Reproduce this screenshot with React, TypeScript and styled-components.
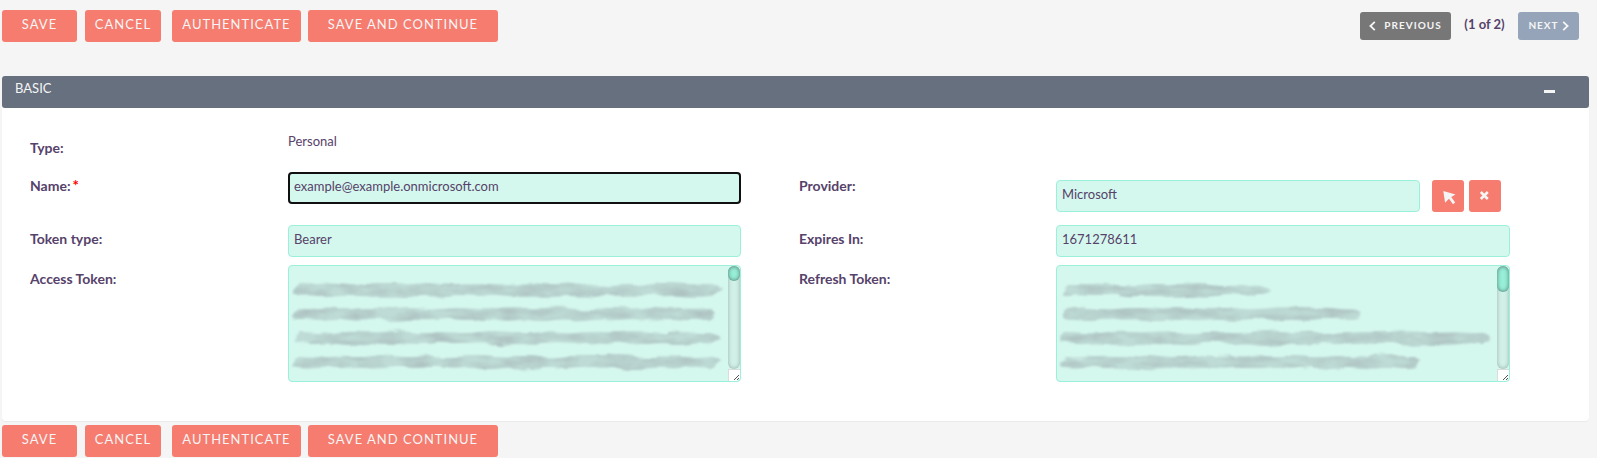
import React from 'react';
import styled, { createGlobalStyle } from 'styled-components';

const Global = createGlobalStyle`
  * { box-sizing: border-box; }
  body { margin: 0; background: #f5f5f5; color: #56426a; font-family: Lato, sans-serif; font-size: 13px; overflow: hidden; }
`;

const Page = styled.div`
  width: 1597px;
  height: 458px;
  display: flex;
  flex-direction: column;
  padding-left: 2px;
  background: #f5f5f5;
`;

const TopBar = styled.div`
  display: flex;
  justify-content: space-between;
  align-items: flex-start;
  height: 76px;
  padding: 10px 18px 0 0;
`;

const Actions = styled.div`
  display: flex;
`;

const ActionButton = styled.button<{ $w: number; $gap?: number }>`
  flex: none;
  width: ${p => p.$w}px;
  height: 32px;
  margin: 0 ${p => p.$gap ?? 0}px 0 0;
  padding: 0 0 4px;
  border: 0;
  border-radius: 3px;
  background: #f67c6f;
  color: #f5f5f5;
  font: 400 13px/28px Lato, sans-serif;
  letter-spacing: 1px;
  white-space: nowrap;
`;

const Pager = styled.div`
  display: flex;
  align-items: center;
  height: 28px;
  margin-top: 2px;
`;

const PageButton = styled.button<{ $w: number; $tone: string; $gap: number }>`
  display: flex;
  align-items: center;
  justify-content: center;
  gap: ${p => p.$gap}px;
  width: ${p => p.$w}px;
  height: 28px;
  padding: 0 0 2px;
  border: 0;
  border-radius: 3px;
  background: ${p => p.$tone};
  color: #f5f5f5;
  font: 700 10px/24px Lato, sans-serif;
  letter-spacing: 1px;

  svg {
    position: relative;
    top: 1px;
  }
`;

const PageCount = styled.span`
  width: 67px;
  padding-bottom: 4px;
  text-align: center;
  font-weight: 700;
  line-height: 20px;
`;

const PanelHeader = styled.div`
  flex: none;
  display: flex;
  justify-content: space-between;
  width: 1587px;
  height: 32px;
  padding: 3px 34px 0 13px;
  border-radius: 3px;
  background: #67707f;
  color: #f5f5f5;
  line-height: 19px;
`;

const Minus = styled.span`
  width: 11px;
  height: 3px;
  margin-top: 11px;
  background: #f5f5f5;
`;

const PanelBody = styled.div`
  flex: none;
  width: 1587px;
  height: 313px;
  margin-bottom: 4px;
  padding: 24px 0 0 28px;
  border-radius: 0 0 4px 4px;
  background: #fff;
  box-shadow: 0 1px 1px rgba(0, 0, 0, 0.05);
`;

const Row = styled.div<{ $h: number }>`
  display: grid;
  grid-template-columns: 258px 453px 58px 257px 454px;
  align-items: start;
  height: ${p => p.$h}px;
`;

const Label = styled.label<{ $top?: number; $col?: number }>`
  grid-column: ${p => p.$col ?? 1};
  padding-top: ${p => p.$top ?? 4}px;
  font-size: 14px;
  font-weight: 700;
  line-height: 20px;
`;

const Required = styled.span`
  color: #f00;
  margin-left: 2px;
  font-size: 15px;
  line-height: 0;
`;

const PlainValue = styled.span`
  line-height: 19px;
`;

const Field = styled.div<{ $w: number; $focus?: boolean }>`
  width: ${p => p.$w}px;
  height: 32px;
  padding: 0 0 4px ${p => (p.$focus ? 4 : 5)}px;
  border: ${p => (p.$focus ? '2px solid #101010' : '1px solid #9af0da')};
  border-radius: 4px;
  background: #d5f8ee;
  line-height: ${p => (p.$focus ? 24 : 26)}px;
`;

const Picker = styled.div`
  display: flex;
  padding-top: 8px;
`;

const IconButton = styled.button<{ $before: number }>`
  display: flex;
  align-items: center;
  justify-content: center;
  width: 32px;
  height: 32px;
  margin: 0 0 0 ${p => p.$before}px;
  padding: 0;
  border: 0;
  border-radius: 3px;
  background: #f67c6f;
`;

const Area = styled.div<{ $w: number }>`
  display: flex;
  width: ${p => p.$w}px;
  height: 117px;
  border: 1px solid #9af0da;
  border-radius: 4px;
  background: #d5f8ee;
`;

const ScrollColumn = styled.div`
  flex: none;
  width: 12px;
  height: 115px;
`;

const Track = styled.div`
  height: 103px;
  border-radius: 6px;
  background: #d1f1e8;
  box-shadow: inset 0 0 4px rgba(0, 0, 0, 0.28);
`;

const Thumb = styled.div<{ $h: number }>`
  height: ${p => p.$h}px;
  border-radius: 6px;
  background: #98efd8;
  box-shadow: inset 0 0 4px rgba(0, 0, 0, 0.5);
`;

const Grip = styled.svg`
  display: block;
`;

const Redaction = styled.svg`
  flex: 1;
  min-width: 0;
  height: 115px;
`;

type Stroke = { y: number; from: number; to: number };

// Brush outline with an uneven, hand-smudged edge.
function smudge({ y, from, to }: Stroke, seed: number) {
  const upper: string[] = [];
  const lower: string[] = [];
  for (let x = from + 5; x <= to - 5; x += 7) {
    const a = Math.sin(x * 0.13 + seed * 2.1) + Math.sin(x * 0.051 + seed);
    const b = Math.sin(x * 0.17 + seed * 1.3) + Math.cos(x * 0.043 + seed);
    upper.push(`${x},${(y - 5.7 - a * 0.6).toFixed(1)}`);
    lower.unshift(`${x},${(y + 5.9 + b * 0.6).toFixed(1)}`);
  }
  return `M${from},${y + 4} L${from + 1},${y - 2} L${upper.join(' L')} L${to},${y - 1} L${lower.join(' L')} Z`;
}

function TokenArea({ id, width, thumb, strokes }: { id: string; width: number; thumb: number; strokes: Stroke[] }) {
  return (
    <Area $w={width}>
      <Redaction>
        <defs>
          <filter id={id} x="0" y="0" width={width} height="115" filterUnits="userSpaceOnUse" colorInterpolationFilters="sRGB">
            <feTurbulence type="fractalNoise" baseFrequency="0.035 0.12" numOctaves="3" seed={width} result="noise" />
            <feDisplacementMap in="SourceGraphic" in2="noise" scale="7" xChannelSelector="R" yChannelSelector="G" result="brush" />
            <feColorMatrix in="noise" type="matrix" values="0 0 0 0 0.68  0 0 0 0 0.76  0 0 0 0 0.76  2 0 0 0 -0.65" result="shade" />
            <feComposite in="shade" in2="brush" operator="in" result="tone" />
            <feMerge result="all">
              <feMergeNode in="brush" />
              <feMergeNode in="tone" />
            </feMerge>
            <feGaussianBlur in="all" stdDeviation="1.1" />
          </filter>
        </defs>
        <g filter={`url(#${id})`} fill="#bedbd5">
          {strokes.map((s, i) => (
            <path key={i} d={smudge(s, i + 1)} />
          ))}
        </g>
      </Redaction>
      <ScrollColumn>
        <Track>
          <Thumb $h={thumb} />
        </Track>
        <Grip width="12" height="12" viewBox="0 0 12 12">
          <path d="M0 0h12v9l-3 3H0z" fill="#fff" />
          <path d="M0 .5h12M.5 0v12" stroke="#dcdcdc" fill="none" />
          <path d="M6 11l5-5M9 11l2-2" stroke="#555" strokeWidth="1" fill="none" />
        </Grip>
      </ScrollColumn>
    </Area>
  );
}

function ActionBar() {
  return (
    <Actions>
      <ActionButton $w={75} $gap={8}>SAVE</ActionButton>
      <ActionButton $w={76} $gap={11}>CANCEL</ActionButton>
      <ActionButton $w={129} $gap={7}>AUTHENTICATE</ActionButton>
      <ActionButton $w={190}>SAVE AND CONTINUE</ActionButton>
    </Actions>
  );
}

export default function App() {
  return (
    <>
      <Global />
      <Page>
        <TopBar>
          <ActionBar />
          <Pager>
            <PageButton $w={91} $tone="#777" $gap={8}>
              <svg width="7" height="10" viewBox="0 0 7 10"><path d="M5.8.8L1.4 5l4.4 4.2" fill="none" stroke="#f5f5f5" strokeWidth="1.8" /></svg>
              PREVIOUS
            </PageButton>
            <PageCount>(1 of 2)</PageCount>
            <PageButton $w={61} $tone="#95a4b8" $gap={3}>
              NEXT
              <svg width="7" height="10" viewBox="0 0 7 10"><path d="M1.2.8L5.6 5 1.2 9.2" fill="none" stroke="#f5f5f5" strokeWidth="1.8" /></svg>
            </PageButton>
          </Pager>
        </TopBar>
        <PanelHeader>
          BASIC
          <Minus />
        </PanelHeader>
        <PanelBody>
          <Row $h={40}>
            <Label $top={6}>Type:</Label>
            <PlainValue>Personal</PlainValue>
          </Row>
          <Row $h={53}>
            <Label>Name:<Required>*</Required></Label>
            <Field $w={453} $focus>example@example.onmicrosoft.com</Field>
            <Label $col={4}>Provider:</Label>
            <Picker>
              <Field $w={364}>Microsoft</Field>
              <IconButton $before={12} aria-label="Select">
                <svg width="32" height="32" viewBox="0 0 32 32"><path d="M11.3 11l12.2 3.6-4.3 2.4 4 5.4-2.2 1.8-4-5.5-3.9 4.1z" fill="#f5f5f5" /></svg>
              </IconButton>
              <IconButton $before={5} aria-label="Clear">
                <svg width="32" height="32" viewBox="0 0 32 32"><path d="M11.8 12l7 7m0-7l-7 7" stroke="#f5f5f5" strokeWidth="2.6" /></svg>
              </IconButton>
            </Picker>
          </Row>
          <Row $h={40}>
            <Label>Token type:</Label>
            <Field $w={453}>Bearer</Field>
            <Label $col={4}>Expires In:</Label>
            <Field $w={454}>1671278611</Field>
          </Row>
          <Row $h={117}>
            <Label>Access Token:</Label>
            <TokenArea
              id="access"
              width={453}
              thumb={15}
              strokes={[
                { y: 24, from: 5, to: 434 },
                { y: 48, from: 4, to: 427 },
                { y: 72, from: 5, to: 433 },
                { y: 96, from: 4, to: 433 },
              ]}
            />
            <Label $col={4}>Refresh Token:</Label>
            <TokenArea
              id="refresh"
              width={454}
              thumb={26}
              strokes={[
                { y: 24, from: 6, to: 214 },
                { y: 48, from: 6, to: 304 },
                { y: 72, from: 3, to: 434 },
                { y: 96, from: 4, to: 364 },
              ]}
            />
          </Row>
        </PanelBody>
        <ActionBar />
      </Page>
    </>
  );
}
